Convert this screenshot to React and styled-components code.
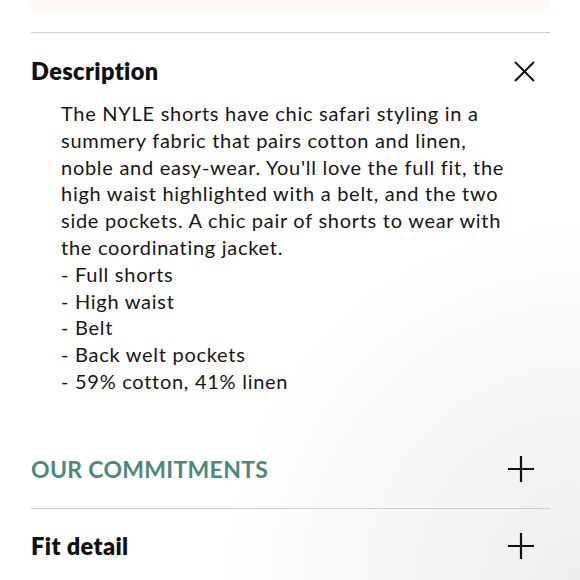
import React from 'react';
import styled, { createGlobalStyle } from 'styled-components';

const GlobalStyle = createGlobalStyle`
  html, body {
    margin: 0;
    padding: 0;
    background: #ffffff;
  }
  body {
    font-family: 'Lato', 'Noto Sans', sans-serif;
    color: #111111;
  }
`;

const Page = styled.div`
  width: 580px;
  height: 580px;
  overflow: hidden;
  padding: 0 30px 0 31px;
  box-sizing: border-box;
  background: radial-gradient(circle at 100% 100%, #eeeeee 0%, #f6f6f6 22%, #ffffff 45%);
`;

const TopCard = styled.div`
  height: 10px;
  background: #fbf8f4;
  border-radius: 0 0 6px 6px;
`;

const Divider = styled.hr`
  margin: ${(p) => p.$top || 22}px 0 0;
  border: none;
  height: 1px;
  background: #cfcfcf;
`;

const Header = styled.div`
  display: flex;
  align-items: center;
  justify-content: space-between;
  height: 28px;
  padding-top: ${(p) => p.$top}px;
`;

const Title = styled.h2`
  margin: 0;
  font-size: ${(p) => (p.$accent ? 23 : 23.5)}px;
  line-height: 28px;
  font-weight: ${(p) => (p.$accent ? 700 : 800)};
  color: ${(p) => (p.$accent ? '#4b8a7a' : '#111111')};
  letter-spacing: ${(p) => (p.$accent ? '0.3px' : '0.4px')};
`;

const IconButton = styled.button`
  width: 28px;
  height: 28px;
  padding: 0;
  margin-right: ${(p) => p.$right}px;
  border: none;
  background: none;
  display: flex;
  align-items: center;
  justify-content: center;
  color: #111111;
`;

const Body = styled.div`
  margin-top: 15px;
  padding-left: 30px;
  font-size: 20px;
  line-height: 26.8px;
  letter-spacing: 0.72px;
  color: #161616;
  white-space: nowrap;
`;

const Line = styled.div``;

const CloseIcon = () => (
  <svg width="21" height="21" viewBox="0 0 21 21" fill="none" stroke="currentColor" strokeWidth="2">
    <path d="M1 1 L20 20 M20 1 L1 20" />
  </svg>
);

const PlusIcon = () => (
  <svg width="28" height="28" viewBox="0 0 28 28" fill="none" stroke="currentColor" strokeWidth="2.2">
    <path d="M14 1 V27 M1 14 H27" />
  </svg>
);

const paragraph = [
  'The NYLE shorts have chic safari styling in a',
  'summery fabric that pairs cotton and linen,',
  "noble and easy-wear. You'll love the full fit, the",
  'high waist highlighted with a belt, and the two',
  'side pockets. A chic pair of shorts to wear with',
  'the coordinating jacket.',
];

const details = ['Full shorts', 'High waist', 'Belt', 'Back welt pockets', '59% cotton, 41% linen'];

export default function App() {
  return (
    <Page>
      <GlobalStyle />
      <TopCard />
      <Divider />

      <Header $top={24}>
        <Title>Description</Title>
        <IconButton aria-label="Close" $right={12}>
          <CloseIcon />
        </IconButton>
      </Header>
      <Body>
        {paragraph.map((l) => (
          <Line key={l}>{l}</Line>
        ))}
        {details.map((d) => (
          <Line key={d}>- {d}</Line>
        ))}
      </Body>

      <Header $top={60}>
        <Title $accent>OUR COMMITMENTS</Title>
        <IconButton aria-label="Open" $right={15}>
          <PlusIcon />
        </IconButton>
      </Header>
      <Divider $top={25} />

      <Header $top={23}>
        <Title>Fit detail</Title>
        <IconButton aria-label="Open" $right={15}>
          <PlusIcon />
        </IconButton>
      </Header>
    </Page>
  );
}
